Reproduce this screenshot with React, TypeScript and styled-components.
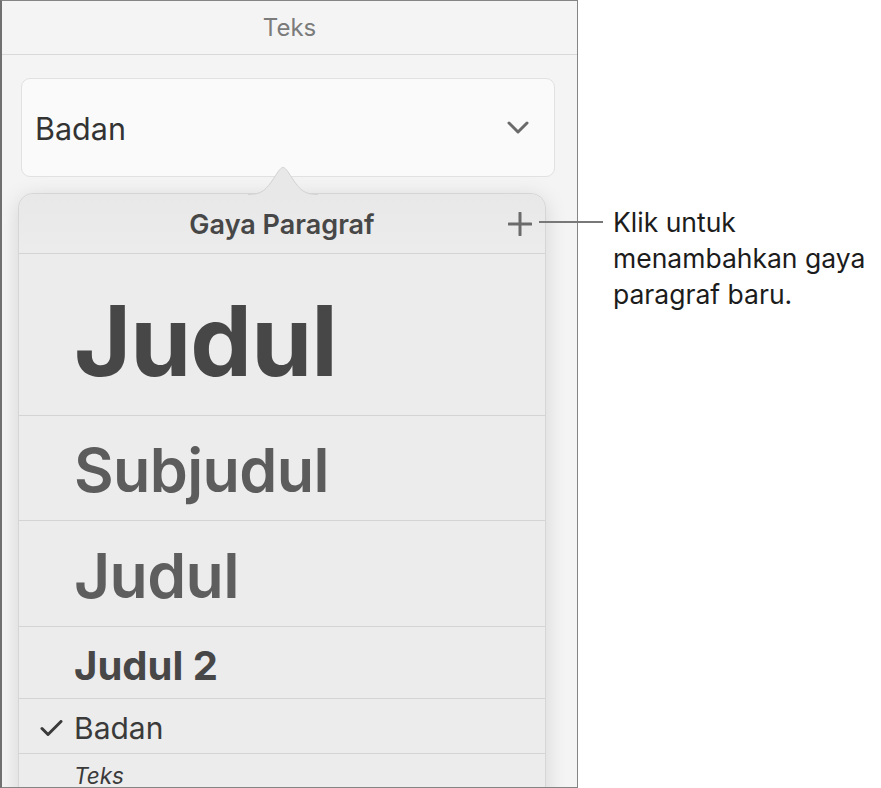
import React from "react";
import styled, { createGlobalStyle } from "styled-components";

const GlobalStyle = createGlobalStyle`
	body {
		margin: 0;
		background: #ffffff;
		font-family: Inter, "Noto Sans", sans-serif;
	}
`;

interface StyleItem {
	label: string;
	height: number;
	size: number;
	weight: number;
	color: string;
	shift: number;
	italic?: boolean;
	checked?: boolean;
	align?: "center" | "flex-start";
}

const styles: StyleItem[] = [
	{ label: "Judul", height: 161, size: 98, weight: 700, color: "#474747", shift: 12 },
	{ label: "Subjudul", height: 104, size: 61, weight: 600, color: "#5c5c5c", shift: 4 },
	{ label: "Judul", height: 105, size: 62.5, weight: 560, color: "#5e5e5e", shift: 4 },
	{ label: "Judul 2", height: 71, size: 40, weight: 650, color: "#474747", shift: 6 },
	{ label: "Badan", height: 54, size: 30, weight: 400, color: "#3a3a3a", shift: 4, checked: true },
	{ label: "Teks", height: 60, size: 22.5, weight: 400, color: "#3a3a3a", shift: 0, italic: true, align: "flex-start" },
];

const App = () => {
	return (
		<Page>
			<GlobalStyle />
			<Panel>
				<PanelHeader>Teks</PanelHeader>
				<PanelBody>
					<Dropdown>
						<DropdownValue>Badan</DropdownValue>
						<svg width="22" height="13" viewBox="0 0 22 13">
							<path d="M2 2 L11 11 L20 2" fill="none" stroke="#6a6a6a" strokeWidth="3" strokeLinecap="round" strokeLinejoin="round" />
						</svg>
					</Dropdown>
					<Popover>
						<PopoverArrow width="70" height="29" viewBox="0 0 70 29">
							<path d="M0 28.5 C14 28.5 18 24 26 12 C31 4 33 1.5 35 1.5 C37 1.5 39 4 44 12 C52 24 56 28.5 70 28.5" fill="#e8e8e8" stroke="#d2d2d2" strokeWidth="1" />
						</PopoverArrow>
						<PopoverHeader>
							<span />
							<PopoverTitle>Gaya Paragraf</PopoverTitle>
							<AddButton>
								<svg width="24" height="24" viewBox="0 0 24 24">
									<path d="M12 1 V23 M1 12 H23" stroke="#6b6b6b" strokeWidth="3" strokeLinecap="round" />
								</svg>
							</AddButton>
						</PopoverHeader>
						{styles.map((item, i) => (
							<StyleRow key={i} $height={item.height} $shift={item.shift} $align={item.align || "center"}>
								<CheckSlot>
									{item.checked && (
										<svg width="23" height="16" viewBox="0 0 23 16">
											<path d="M2 8.5 L8 14.5 L21 1.5" fill="none" stroke="#3a3a3a" strokeWidth="3" strokeLinecap="round" strokeLinejoin="round" />
										</svg>
									)}
								</CheckSlot>
								<StyleName
									$size={item.size}
									$weight={item.weight}
									$color={item.color}
									$italic={!!item.italic}
								>
									{item.label}
								</StyleName>
							</StyleRow>
						))}
					</Popover>
				</PanelBody>
			</Panel>
			<Callout>
				Klik untuk
				<br />
				menambahkan gaya
				<br />
				paragraf baru.
			</Callout>
		</Page>
	);
};

const Page = styled.div`
	display: flex;
	align-items: flex-start;
	width: 881px;
	height: 788px;
	overflow: hidden;
`;
const Panel = styled.div`
	flex-shrink: 0;
	width: 578px;
	height: 788px;
	box-sizing: border-box;
	border: 1px solid #858585;
	border-left: 2px solid #707070;
	background: #f4f4f4;
	display: flex;
	flex-direction: column;
	overflow: hidden;
`;
const PanelHeader = styled.header`
	flex-shrink: 0;
	height: 53px;
	border-bottom: 1px solid #d9d9d9;
	display: flex;
	align-items: center;
	justify-content: center;
	font-size: 24px;
	color: #7b7b7b;
`;
const PanelBody = styled.div`
	flex-shrink: 0;
	padding: 23px 22px 0 19px;
	display: flex;
	flex-direction: column;
`;
const Dropdown = styled.div`
	flex-shrink: 0;
	height: 99px;
	box-sizing: border-box;
	border: 1px solid #e1e1e1;
	border-radius: 9px;
	background: #fafafa;
	display: flex;
	align-items: center;
	justify-content: space-between;
	padding: 0 25px 0 13px;
`;
const DropdownValue = styled.span`
	font-size: 30.5px;
	color: #333333;
	padding-top: 2px;
`;
const Popover = styled.div`
	flex-shrink: 0;
	position: relative;
	margin: 16px 0 0 -3px;
	width: 528px;
	box-sizing: border-box;
	border: 1px solid #d6d6d6;
	border-radius: 15px 15px 0 0;
	background: #ececec;
	box-shadow: 0 4px 22px rgba(0, 0, 0, 0.13);
`;
const PopoverArrow = styled.svg`
	position: absolute;
	top: -28px;
	left: 229px;
`;
const PopoverHeader = styled.div`
	height: 59px;
	border-bottom: 1px solid #d4d4d4;
	display: grid;
	grid-template-columns: 1fr auto 1fr;
	align-items: center;
	background: linear-gradient(#e8e8e8, #ececec);
	border-radius: 15px 15px 0 0;
`;
const PopoverTitle = styled.span`
	font-size: 27px;
	font-weight: 600;
	color: #474747;
	padding-top: 2px;
`;
const AddButton = styled.div`
	justify-self: end;
	padding-right: 13px;
	display: flex;
	padding-top: 1px;
`;
const StyleRow = styled.div<{ $height: number; $shift: number; $align: string }>`
	box-sizing: border-box;
	height: ${(p) => p.$height + 1}px;
	border-bottom: 1px solid #d4d4d4;
	display: flex;
	align-items: ${(p) => p.$align};
	padding-top: ${(p) => (p.$align === "center" ? p.$shift : 11)}px;
`;
const CheckSlot = styled.div`
	width: 55px;
	flex-shrink: 0;
	display: flex;
	justify-content: flex-end;
	padding-right: 11px;
	box-sizing: border-box;
`;
const StyleName = styled.span<{ $size: number; $weight: number; $color: string; $italic: boolean }>`
	font-size: ${(p) => p.$size}px;
	font-weight: ${(p) => p.$weight};
	color: ${(p) => p.$color};
	font-style: ${(p) => (p.$italic ? "italic" : "normal")};
	line-height: 1;
	letter-spacing: ${(p) => (p.$size > 50 ? "-0.01em" : "0")};
`;
const Callout = styled.div`
	position: relative;
	margin: 204px 0 0 35px;
	font-size: 26.5px;
	line-height: 36px;
	color: #1c1c1c;
	white-space: nowrap;

	&::before {
		content: "";
		position: absolute;
		left: -74px;
		top: 17px;
		width: 64px;
		height: 2px;
		background: #787878;
	}
`;

export default App;
